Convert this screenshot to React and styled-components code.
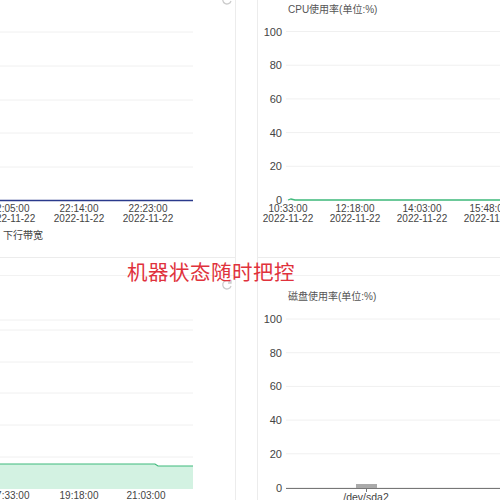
import React from 'react';
import styled, { createGlobalStyle } from 'styled-components';

const Global = createGlobalStyle`
  html, body { margin: 0; padding: 0; background: #fff; overflow: hidden; }
  body { font-family: "Liberation Sans", "Noto Sans CJK SC", sans-serif; }
`;

const Page = styled.div`
  position: relative;
  width: 500px;
  height: 500px;
  display: grid;
  grid-template-columns: 236px 21px 243px;
  overflow: hidden;
`;

const Column = styled.div`
  display: flex;
  flex-direction: column;
  border-${p => p.side}: 1px solid #ececec;
`;

const Card = styled.div`
  height: ${p => p.h}px;
  flex-shrink: 0;
  border-bottom: ${p => (p.divider ? '1px solid #ececec' : 'none')};
`;

const Gap = styled.div`
  height: 17px;
  flex-shrink: 0;
  border-bottom: 1px solid #f2f2f2;
`;

const Chart = styled.svg`
  display: block;
  font-family: "Liberation Sans", "Noto Sans CJK SC", sans-serif;
`;

const Slogan = styled.div`
  position: absolute;
  left: 127px;
  top: 256px;
  font-size: 20.5px;
  color: #e0323c;
  font-family: "Noto Sans CJK SC", sans-serif;
  letter-spacing: 0.5px;
`;

const Refresh = ({ y }) => (
  <svg width="12" height="12" viewBox="0 0 12 12" style={{ position: 'absolute', left: 221, top: y }}>
    <path d="M9.5 3.5A4.2 4.2 0 1 0 10 7" fill="none" stroke="#ccc" strokeWidth="1.3" />
    <path d="M10 1v3H7" fill="none" stroke="#ccc" strokeWidth="1.3" />
  </svg>
);

const grid = '#f0f0f0';
const tc = '#444';

const XLabels = ({ items, y }) =>
  items.map(([x, t, d]) => (
    <g key={x}>
      <text x={x} y={y} fontSize="10" fill={tc} textAnchor="middle">{t}</text>
      {d && <text x={x} y={y + 9.5} fontSize="10" fill={tc} textAnchor="middle">{d}</text>}
    </g>
  ));

const YAxis = ({ x1, x2, top, step }) =>
  [100, 80, 60, 40, 20, 0].map((v, i) => (
    <g key={v}>
      <line x1={x1} x2={x2} y1={top + i * step} y2={top + i * step} stroke={grid} />
      <text x={x1 - 4} y={top + i * step + 4} fontSize="11" fill={tc} textAnchor="end">{v}</text>
    </g>
  ));

const D = '2022-11-22';

export default function App() {
  return (
    <Page>
      <Global />
      <Column side="right">
        <Card h={257} divider>
          <Chart width="235" height="257">
            {[32, 66, 100, 133, 167].map(y => (
              <line key={y} x1="0" x2="193" y1={y} y2={y} stroke={grid} />
            ))}
            <line x1="0" x2="193" y1="200.5" y2="200.5" stroke="#2a3a8c" strokeWidth="1.3" />
            <XLabels y={212} items={[[10, '22:05:00', D], [79, '22:14:00', D], [148, '22:23:00', D]]} />
            <text x="3" y="239" fontSize="10" fill={tc}>下行带宽</text>
          </Chart>
        </Card>
        <Gap />
        <Card h={224}>
          <Chart width="235" height="224">
            {[44, 54, 86, 117, 149, 181].map(y => (
              <line key={y} x1="0" x2="193" y1={y} y2={y} stroke={grid} />
            ))}
            <path d="M0 188 L155 188 L158 190 L193 190 L193 213 L0 213Z" fill="#d3f2e2" />
            <path d="M0 188 L155 188 L158 190 L193 190" fill="none" stroke="#3fba7c" strokeWidth="1.2" />
            <XLabels y={223} items={[[10, '17:33:00'], [79, '19:18:00'], [146, '21:03:00']]} />
          </Chart>
        </Card>
      </Column>
      <div />
      <Column side="left">
        <Card h={257} divider>
          <Chart width="243" height="257">
            <text x="30" y="13" fontSize="10" fill="#555">CPU使用率(单位:%)</text>
            <YAxis x1={28} x2={243} top={31.5} step={33.7} />
            <path d="M30 200 L33 199 L37 200 L243 200" fill="none" stroke="#3fba7c" strokeWidth="1.3" />
            <XLabels y={212} items={[[30, '10:33:00', D], [97, '12:18:00', D], [164, '14:03:00', D], [231, '15:48:00', D]]} />
          </Chart>
        </Card>
        <Gap />
        <Card h={224}>
          <Chart width="243" height="224">
            <text x="30" y="24" fontSize="10" fill="#555">磁盘使用率(单位:%)</text>
            <YAxis x1={28} x2={243} top={43} step={33.7} />
            <rect x="98" y="208" width="21" height="4" fill="#aaa" />
            <line x1="28" x2="243" y1="212.5" y2="212.5" stroke="#777" />
            <line x1="108.5" x2="108.5" y1="212" y2="216" stroke="#777" />
            <text x="108" y="225" fontSize="10.5" fill={tc} textAnchor="middle">/dev/sda2</text>
          </Chart>
        </Card>
      </Column>
      <Refresh y={-6} />
      <Refresh y={279} />
      <Slogan>机器状态随时把控</Slogan>
    </Page>
  );
}
